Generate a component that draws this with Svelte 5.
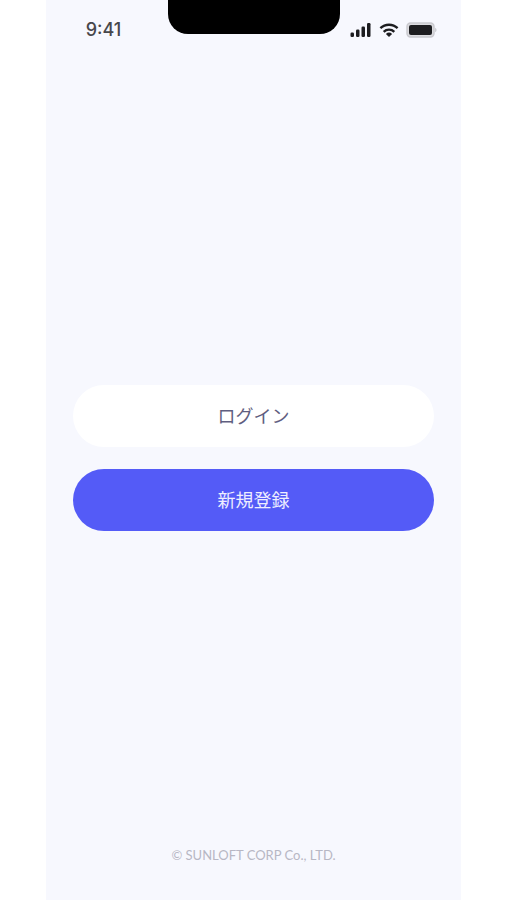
<script>
	import { createEventDispatcher } from 'svelte';

	export let time = '9:41';

	const dispatch = createEventDispatcher();
</script>

<div class="screen">
	<header class="status-bar">
		<time class="clock">{time}</time>
		<div class="notch"></div>
		<div class="indicators">
			<svg width="22" height="14" viewBox="0 0 22 14" aria-hidden="true">
				<rect x="0.5" y="9.5" width="3.5" height="4.5" rx="1.2" />
				<rect x="6" y="6.5" width="3.5" height="7.5" rx="1.2" />
				<rect x="11.5" y="3.5" width="3.5" height="10.5" rx="1.2" />
				<rect x="17" y="0" width="3.5" height="14" rx="1.2" />
			</svg>
			<svg width="20" height="14" viewBox="0 0 20 14" aria-hidden="true">
				<path class="wave" d="M1.4 5.2a12.4 12.4 0 0 1 17.2 0" />
				<path class="wave" d="M4.7 8.8a7.6 7.6 0 0 1 10.6 0" />
				<path d="M10 14l-3.1-3.1a4.5 4.5 0 0 1 6.2 0z" />
			</svg>
			<svg width="31" height="16" viewBox="0 0 31 16" aria-hidden="true">
				<rect class="case" x="1" y="1" width="27" height="14" rx="3.5" />
				<rect x="3" y="3" width="23" height="10" rx="2" />
				<path class="tip" d="M29.2 5.8a2.5 2.5 0 0 1 0 4.4z" />
			</svg>
		</div>
	</header>

	<main class="actions">
		<button class="btn login" type="button" on:click={() => dispatch('login')}>ログイン</button>
		<button class="btn signup" type="button" on:click={() => dispatch('signup')}>新規登録</button>
	</main>

	<footer class="copyright">© SUNLOFT CORP Co., LTD.</footer>
</div>

<style>
	:global(body) {
		background: #fff;
	}

	.screen {
		display: flex;
		flex-direction: column;
		width: 82%;
		min-height: 100vh;
		margin: 0 auto;
		background: #f7f8fe;
		font-family: 'Noto Sans CJK JP', sans-serif;
	}

	.status-bar {
		display: grid;
		grid-template-columns: 1fr 172px 1fr;
		height: 70px;
		padding-left: 2px;
	}

	.clock {
		padding: 18px 0 0 38px;
		color: #47474b;
		font-family: Inter, sans-serif;
		font-size: 18px;
		font-weight: 500;
		line-height: 24px;
	}

	.notch {
		height: 34px;
		background: #000;
		border-radius: 0 0 20px 20px;
	}

	.indicators {
		display: flex;
		align-items: center;
		justify-content: flex-end;
		gap: 7px;
		height: 60px;
		padding-right: 24px;
		fill: #1d1d20;
	}

	.wave {
		fill: none;
		stroke: #1d1d20;
		stroke-width: 2.4;
	}

	.case {
		fill: #dcdce0;
		stroke: #c9c9ce;
		stroke-width: 1.4;
	}

	.tip {
		fill: #c4c4c9;
	}

	.actions {
		display: flex;
		flex: 1;
		flex-direction: column;
		justify-content: center;
		gap: 22px;
		padding: 0 27px;
	}

	.btn {
		height: 62px;
		padding: 0 0 2px;
		border: 0;
		border-radius: 31px;
		font-family: inherit;
		font-size: 18px;
		cursor: pointer;
	}

	.btn:focus-visible {
		outline: 2px solid #9fa3ff;
		outline-offset: 2px;
	}

	.login {
		background: #fff;
		color: #5f5e80;
	}

	.signup {
		background: #545bf7;
		color: #eeeeff;
	}

	.copyright {
		padding-bottom: 36px;
		color: #b7b7c4;
		font-family: Lato, sans-serif;
		font-size: 13px;
		line-height: 18px;
		text-align: center;
	}
</style>
